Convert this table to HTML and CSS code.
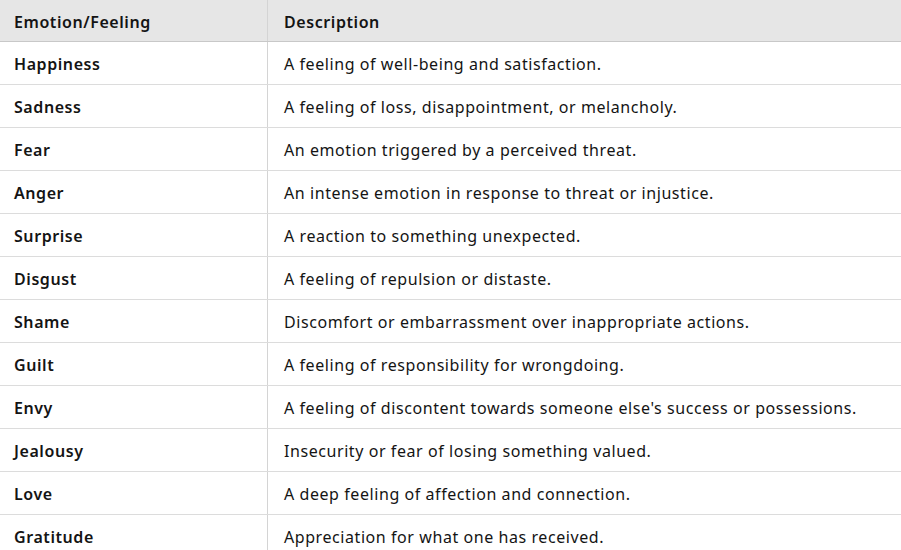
FILE: index.html
```html
<!DOCTYPE html>
<html>
<head>
<meta charset="utf-8">
<link rel="stylesheet" href="styles.css">
</head>
<body>
<table class="emotions">
  <thead>
    <tr><th class="col-name">Emotion/Feeling</th><th class="col-desc">Description</th></tr>
  </thead>
  <tbody>
    <tr><td class="name">Happiness</td><td>A feeling of well-being and satisfaction.</td></tr>
    <tr><td class="name">Sadness</td><td>A feeling of loss, disappointment, or melancholy.</td></tr>
    <tr><td class="name">Fear</td><td>An emotion triggered by a perceived threat.</td></tr>
    <tr><td class="name">Anger</td><td>An intense emotion in response to threat or injustice.</td></tr>
    <tr><td class="name">Surprise</td><td>A reaction to something unexpected.</td></tr>
    <tr><td class="name">Disgust</td><td>A feeling of repulsion or distaste.</td></tr>
    <tr><td class="name">Shame</td><td>Discomfort or embarrassment over inappropriate actions.</td></tr>
    <tr><td class="name">Guilt</td><td>A feeling of responsibility for wrongdoing.</td></tr>
    <tr><td class="name">Envy</td><td>A feeling of discontent towards someone else's success or possessions.</td></tr>
    <tr><td class="name">Jealousy</td><td>Insecurity or fear of losing something valued.</td></tr>
    <tr><td class="name">Love</td><td>A deep feeling of affection and connection.</td></tr>
    <tr><td class="name">Gratitude</td><td>Appreciation for what one has received.</td></tr>
  </tbody>
</table>
</body>
</html>
```
FILE: styles.css
```css
html, body {
  margin: 0;
  padding: 0;
  background: #ffffff;
}
body {
  font-family: "Noto Sans", "Open Sans", sans-serif;
  font-size: 16px;
  letter-spacing: 0.57px;
  color: #141414;
  overflow: hidden;
}
.emotions {
  border-collapse: collapse;
  width: 901px;
  table-layout: fixed;
}
.emotions th,
.emotions td {
  text-align: left;
  padding: 2px 0 0 16px;
  white-space: nowrap;
}
.emotions th {
  background: #e6e6e6;
  height: 39px;
  font-weight: 600;
  border-bottom: 1px solid #c8c8c8;
}
.emotions td {
  height: 40px;
  border-bottom: 1px solid #dcdcdc;
}
.emotions th:first-child,
.emotions td:first-child {
  padding-left: 14px;
  width: 253px;
  border-right: 1px solid #d4d4d4;
}
.emotions td.name {
  font-weight: 600;
}
```
